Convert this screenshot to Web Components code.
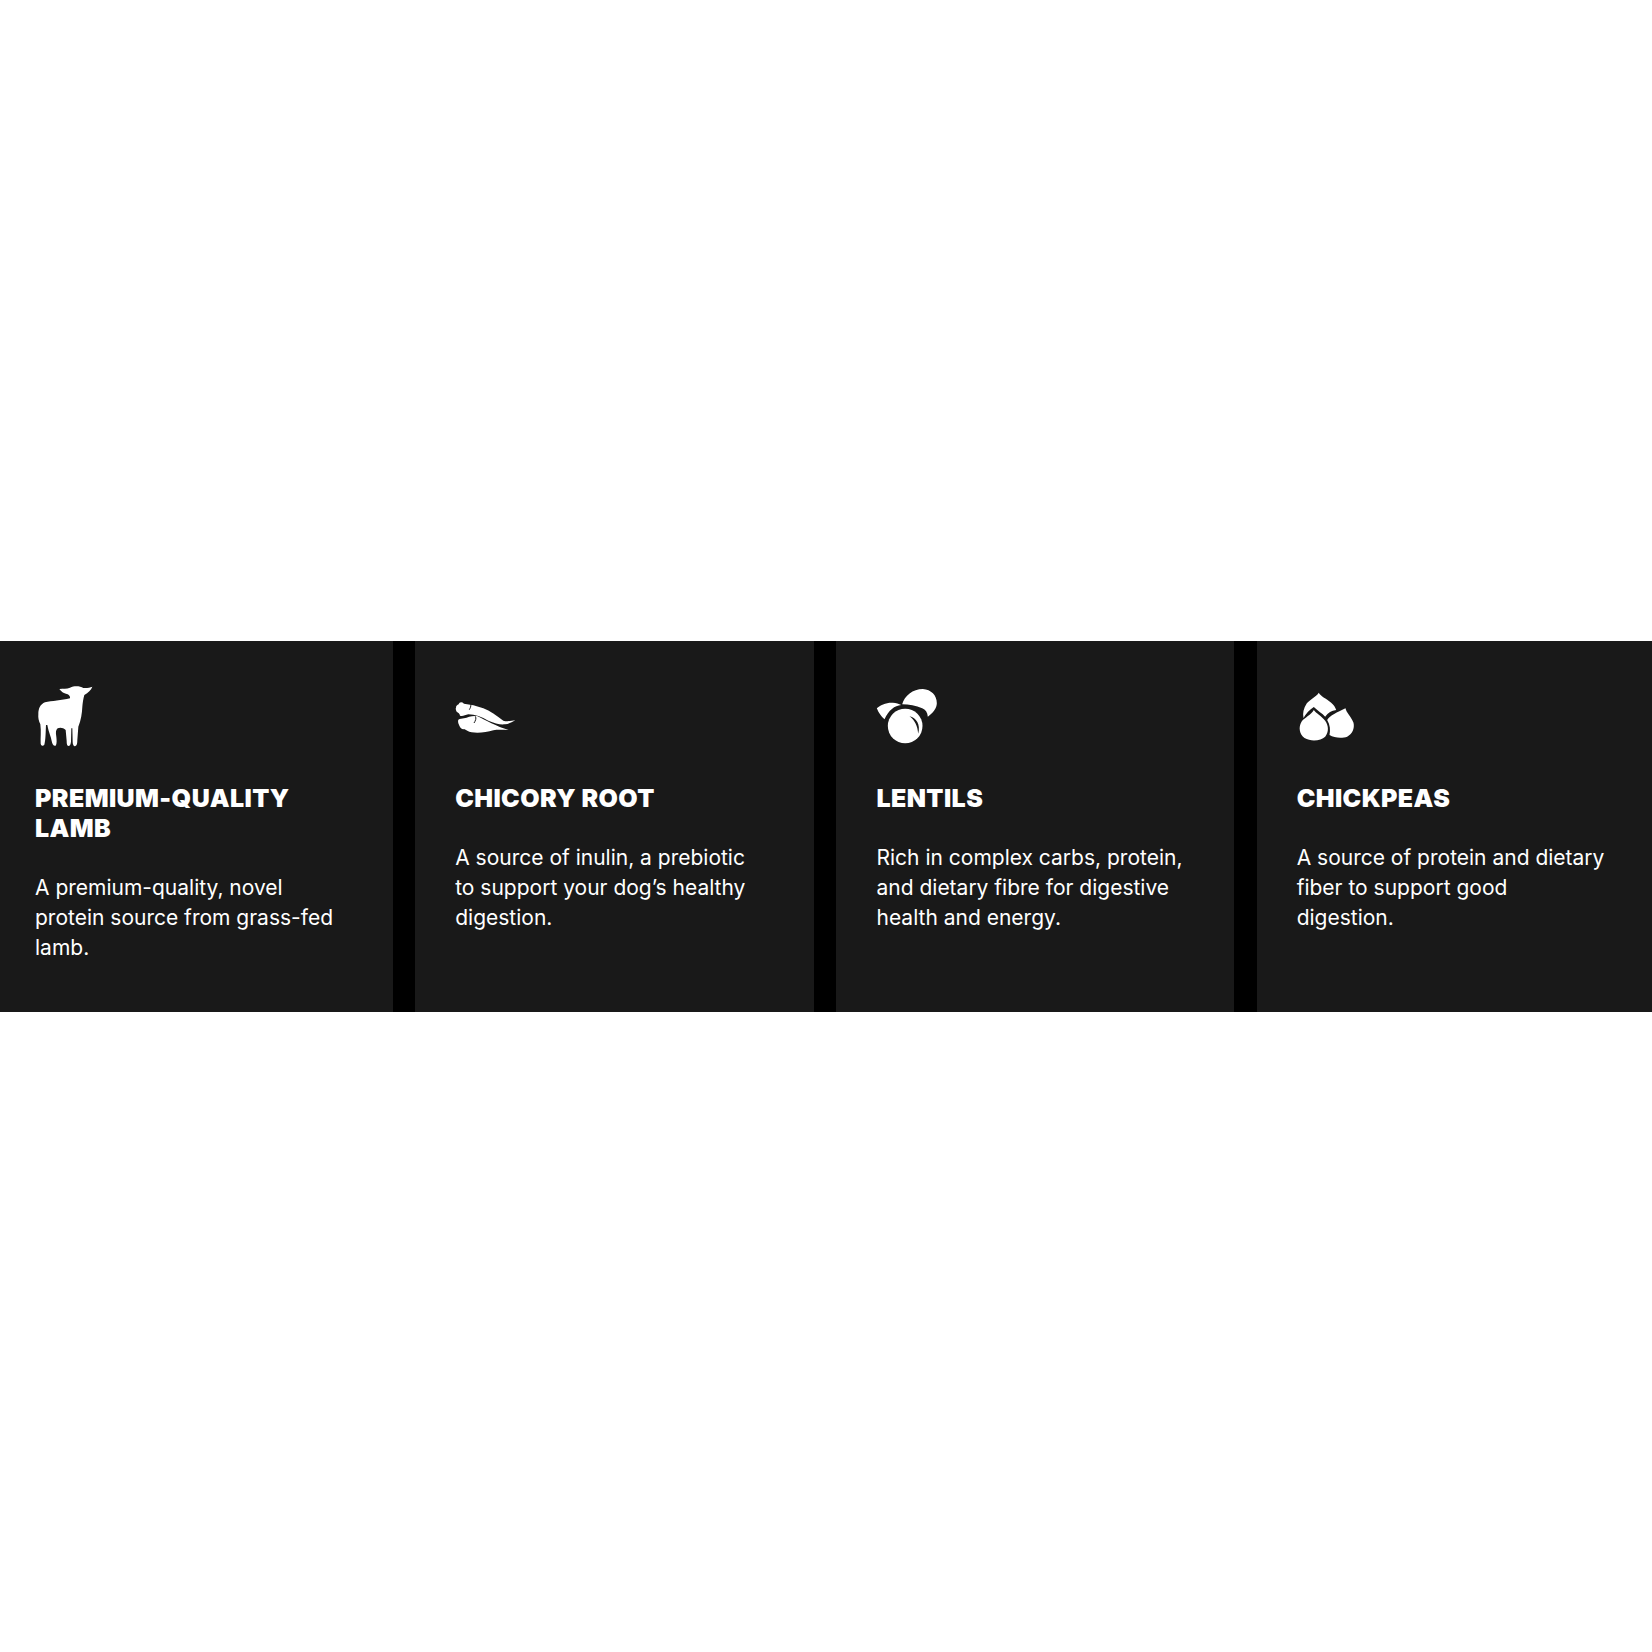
<!DOCTYPE html>
<html>
<head>
<meta charset="utf-8">
<title>Ingredients</title>
<style>
    html, body { margin: 0; background: #fff; }
    body { height: 1652px; display: flex; flex-direction: column; font-family: Inter, "Liberation Sans", sans-serif; }
    ingredient-strip { margin-top: 641px; }
</style>
</head>
<body>
<ingredient-strip>
    <ingredient-card style="--pad-left:35px">
        <svg slot="icon" width="80" height="70" viewBox="30 18 240 210"><path fill="#fff" d="M103 42C115 40 125 42 135 38C148 32 165 33 175 39C185 40 195 38 202 35C198 45 190 53 178 60C175 70 173 85 172 95C171 115 168 135 160 155L157 195C157 205 156 212 150 214C145 213 143 207 143 200L142 160H139L138 200C137 208 135 213 130 213C126 213 125 206 125 198L122 165C115 158 105 157 98 160C92 165 92 172 94 185C95 195 96 206 92 212C86 214 82 208 80 198C78 185 72 175 67 150H63C62 170 62 195 58 209C54 214 49 213 47 206C46 190 49 170 46 148C41 138 39 128 40 118C40 100 46 88 60 82C80 78 110 76 135 70C136 65 133 60 128 58C118 56 108 50 103 42Z"/></svg>
        <span slot="title">PREMIUM-QUALITY<br>LAMB</span>
        A premium-quality, novel<br>protein source from grass-fed<br>lamb.
    </ingredient-card>
    <ingredient-card>
        <svg slot="icon" width="80" height="70" viewBox="45 -12 240 210"><path fill="#fff" d="M48 68C48 62 52 60 56 58C58 50 66 50 72 56C90 58 110 62 130 70C150 78 170 92 190 107C200 110 215 108 226 106C215 112 205 117 195 118C180 120 165 115 145 107C125 95 105 88 85 88C75 90 68 95 60 92C60 86 54 82 50 80C48 76 46 72 48 68Z"/><path fill="#fff" d="M55 104C60 100 66 102 72 100C85 96 100 90 113 94C135 105 170 125 206 135C190 135 175 133 160 136C140 142 115 145 95 142C85 140 78 135 72 132C68 134 62 130 60 126C58 120 52 112 55 104Z"/><path fill="none" stroke="#191919" stroke-width="3" d="M92 58C94 64 90 70 88 74M106 94C110 100 106 108 102 114"/></svg>
        <span slot="title">CHICORY ROOT</span>
        A source of inulin, a prebiotic<br>to support your dog’s healthy<br>digestion.
    </ingredient-card>
    <ingredient-card>
        <svg slot="icon" width="80" height="70" viewBox="49.5 18 240 210"><path fill="#fff" d="M128 88C135 62 160 42 190 42C215 44 232 60 232 85C232 100 220 115 205 125C204 112 198 104 188 100C170 92 148 88 128 88ZM52 100C62 90 80 82 100 83C110 84 118 86 125 90C105 92 88 105 75 133C65 125 57 113 52 100Z"/><circle fill="#fff" cx="137" cy="153" r="52"/><path fill="#191919" d="M150 124C170 127 184 150 176 176C174 152 166 136 150 124Z"/></svg>
        <span slot="title">LENTILS</span>
        Rich in complex carbs, protein,<br>and dietary fibre for digestive<br>health and energy.
    </ingredient-card>
    <ingredient-card>
        <svg slot="icon" width="80" height="70" viewBox="52.5 3 240 210"><path fill="#fff" d="M118 38C122 48 140 55 155 68C163 75 168 82 170 90C156 92 146 98 137 110C128 100 116 94 103 81C90 90 80 100 72 114C69 100 72 85 82 70C92 58 108 52 118 38Z"/><path fill="#fff" d="M103 90C110 100 125 108 137 122C147 135 149 155 137 170C125 182 95 186 75 174C60 162 56 142 66 125C76 112 95 105 103 90Z"/><path fill="#fff" d="M198 85C200 98 215 110 222 128C226 145 218 162 203 170C190 175 165 175 150 165C153 150 152 135 143 120C152 106 172 98 198 85Z"/></svg>
        <span slot="title">CHICKPEAS</span>
        A source of protein and dietary<br>fiber to support good<br>digestion.
    </ingredient-card>
</ingredient-strip>

<script>
class IngredientStrip extends HTMLElement {
    constructor() {
        super();
        this.attachShadow({ mode: 'open' });
    }

    connectedCallback() {
        this.shadowRoot.innerHTML = `
            <style>
                :host {
                    display: grid;
                    grid-template-columns: 392.8px 398.9px 397.8px 395.3px;
                    column-gap: 22.4px;
                    background: #000;
                    overflow: hidden;
                }
            </style>
            <slot></slot>
        `;
    }
}

class IngredientCard extends HTMLElement {
    constructor() {
        super();
        this.attachShadow({ mode: 'open' });
    }

    connectedCallback() {
        this.shadowRoot.innerHTML = `
            <style>
                :host {
                    display: flex;
                    flex-direction: column;
                    box-sizing: border-box;
                    height: 371px;
                    padding: 40px 0 0 var(--pad-left, 40px);
                    background: #191919;
                    color: #fff;
                    font-family: Inter, "Liberation Sans", sans-serif;
                    font-size: 21px;
                    line-height: 30px;
                }

                .icon { height: 70px; margin-bottom: 32px; line-height: 0; }

                h3 {
                    margin: 0 0 30px;
                    font-size: 25px;
                    font-weight: 900;
                    letter-spacing: 0.4px;
                    line-height: 30px;
                }
            </style>
            <div class="icon"><slot name="icon"></slot></div>
            <h3><slot name="title"></slot></h3>
            <div><slot></slot></div>
        `;
    }
}

customElements.define('ingredient-strip', IngredientStrip);
customElements.define('ingredient-card', IngredientCard);
</script>
</body>
</html>
